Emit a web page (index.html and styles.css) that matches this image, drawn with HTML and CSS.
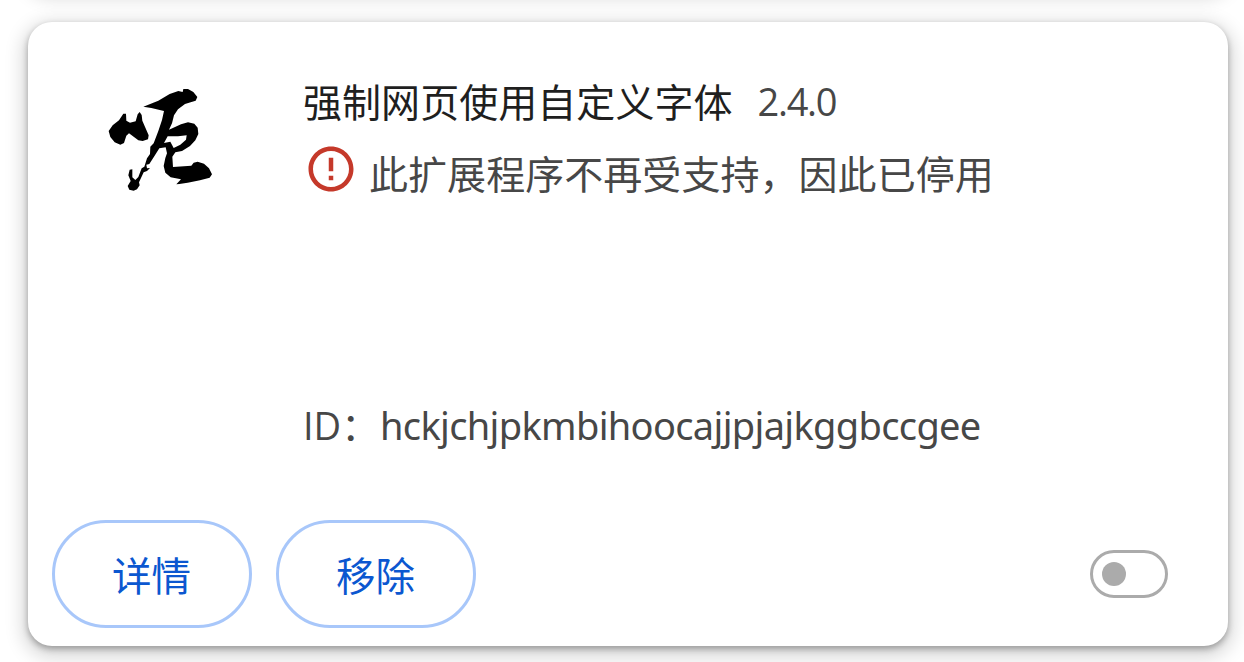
FILE: index.html
```html
<!DOCTYPE html>
<html lang="zh-CN">
<head>
<meta charset="utf-8">
<title>扩展程序</title>
<link rel="stylesheet" href="styles.css">
</head>
<body>
<main class="list">
  <div class="card card-previous"></div>
  <article class="card">
    <div class="main">
      <svg class="logo" viewBox="0 0 420 390" aria-hidden="true">
        <path d="M56 168L68 151L87 136L100 116L108 116L109 137L120 143L137 139L143 118L149 111L155 120L157 137L176 181L174 193L158 198L145 196L117 175L109 182L102 204L91 209L74 202L61 186Z"/>
        <path fill-rule="evenodd" d="M160 95L205 77L239 57L265 48L278 51L280 42L294 42L310 51L322 66L317 77L302 82L285 87L264 103L252 121L246 145L237 164L273 148L294 142L313 146L323 158L325 177L316 196L300 213L276 228L256 232L247 245L249 276L304 272L311 263L323 260L342 266L357 280L366 298L359 308L330 316L293 323L268 327L259 328L273 313L242 307L226 293L221 273L226 249L231 235L227 217L208 220L191 247L178 267L169 269L171 280L180 279L171 288L161 292L153 309L147 322L149 331L141 343L131 347L118 344L113 333L122 318L115 301L119 284L127 283L127 307L136 315L145 306L155 280L163 275L171 250L180 237L181 215L191 205L205 168L216 135L222 108L184 99ZM233 184L222 204L241 200L251 219L271 209L288 194L290 181L264 184Z"/>
      </svg>
      <div class="content">
        <div class="title"><span class="name">强制网页使用自定义字体</span><span class="version">2.4.0</span></div>
        <div class="warning">
          <svg class="alert" viewBox="0 0 24 24" aria-hidden="true"><path d="M11 15h2v2h-2zm0-8h2v6h-2zm.99-5C6.47 2 2 6.48 2 12s4.47 10 9.99 10C17.52 22 22 17.52 22 12S17.52 2 11.99 2zM12 20c-4.42 0-8-3.58-8-8s3.58-8 8-8 8 3.58 8 8-3.58 8-8 8z"/></svg>
          <span>此扩展程序不再受支持，因此已停用</span>
        </div>
        <div class="identifier"><span class="id-label">ID：</span><span class="id-value">hckjchjpkmbihoocajjpjajkggbccgee</span></div>
      </div>
    </div>
    <div class="actions">
      <button class="button">详情</button>
      <button class="button">移除</button>
      <span class="toggle" role="switch" aria-checked="false"><span class="knob"></span></span>
    </div>
  </article>
</main>
</body>
</html>
```
FILE: styles.css
```css
* { box-sizing: border-box; }
body {
  margin: 0;
  height: 662px;
  overflow: hidden;
  background: #fff;
  color: #474747;
  font: 39px/60px "Open Sans", "Noto Sans CJK SC", sans-serif;
}
.list {
  display: flex;
  flex-direction: column;
  gap: 36px;
  margin: -114px 16px 0 28px;
}
.card {
  display: flex;
  flex-direction: column;
  flex: none;
  width: 1200px;
  height: 624px;
  border-radius: 24px;
  background: #fff;
  box-shadow: 0 3px 6px rgba(0, 0, 0, .3), 0 6px 18px 6px rgba(0, 0, 0, .15);
}
.card-previous { height: 100px; }
.main {
  display: flex;
  height: 474px;
  padding: 48px 24px 0 60px;
}
.logo {
  width: 140px;
  height: 130px;
  margin: 5px 0 0 2px;
  filter: blur(.7px);
}
.content {
  display: flex;
  flex-direction: column;
  margin-left: 73px;
  white-space: nowrap;
}
.title { display: flex; height: 72px; }
.name {
  color: #1f1f1f;
  font-family: "Noto Sans CJK SC", sans-serif;
  letter-spacing: .05px;
}
.version { margin: 1px 0 0 25px; font-size: 38px; letter-spacing: -1.3px; }
.warning {
  display: flex;
  height: 72px;
  gap: 11px;
  font-family: "Noto Sans CJK SC", sans-serif;
  letter-spacing: .05px;
}
.alert { width: 54px; height: 54px; margin: 0 0 0 1px; fill: #c5392a; }
.identifier { display: flex; margin-top: 181px; font-size: 38px; }
.id-label { width: 77px; }
.id-value { font-family: "Noto Sans", sans-serif; letter-spacing: -.66px; }
.actions {
  display: flex;
  align-items: center;
  height: 150px;
  padding: 0 60px 0 24px;
  gap: 24px;
}
.button {
  width: 200px;
  height: 108px;
  margin-top: 6px;
  border: 3px solid #a8c7fa;
  border-radius: 54px;
  padding: 0 1px 0 0;
  background: transparent;
  color: #0b57d0;
  font: 39.5px/60px "Noto Sans CJK SC", sans-serif;
}
.toggle {
  display: flex;
  align-items: center;
  width: 78px;
  height: 48px;
  margin: 6px 0 0 auto;
  padding-left: 9px;
  border: 3px solid #ababab;
  border-radius: 24px;
}
.knob { width: 24px; height: 24px; border-radius: 50%; background: #ababab; }
```
